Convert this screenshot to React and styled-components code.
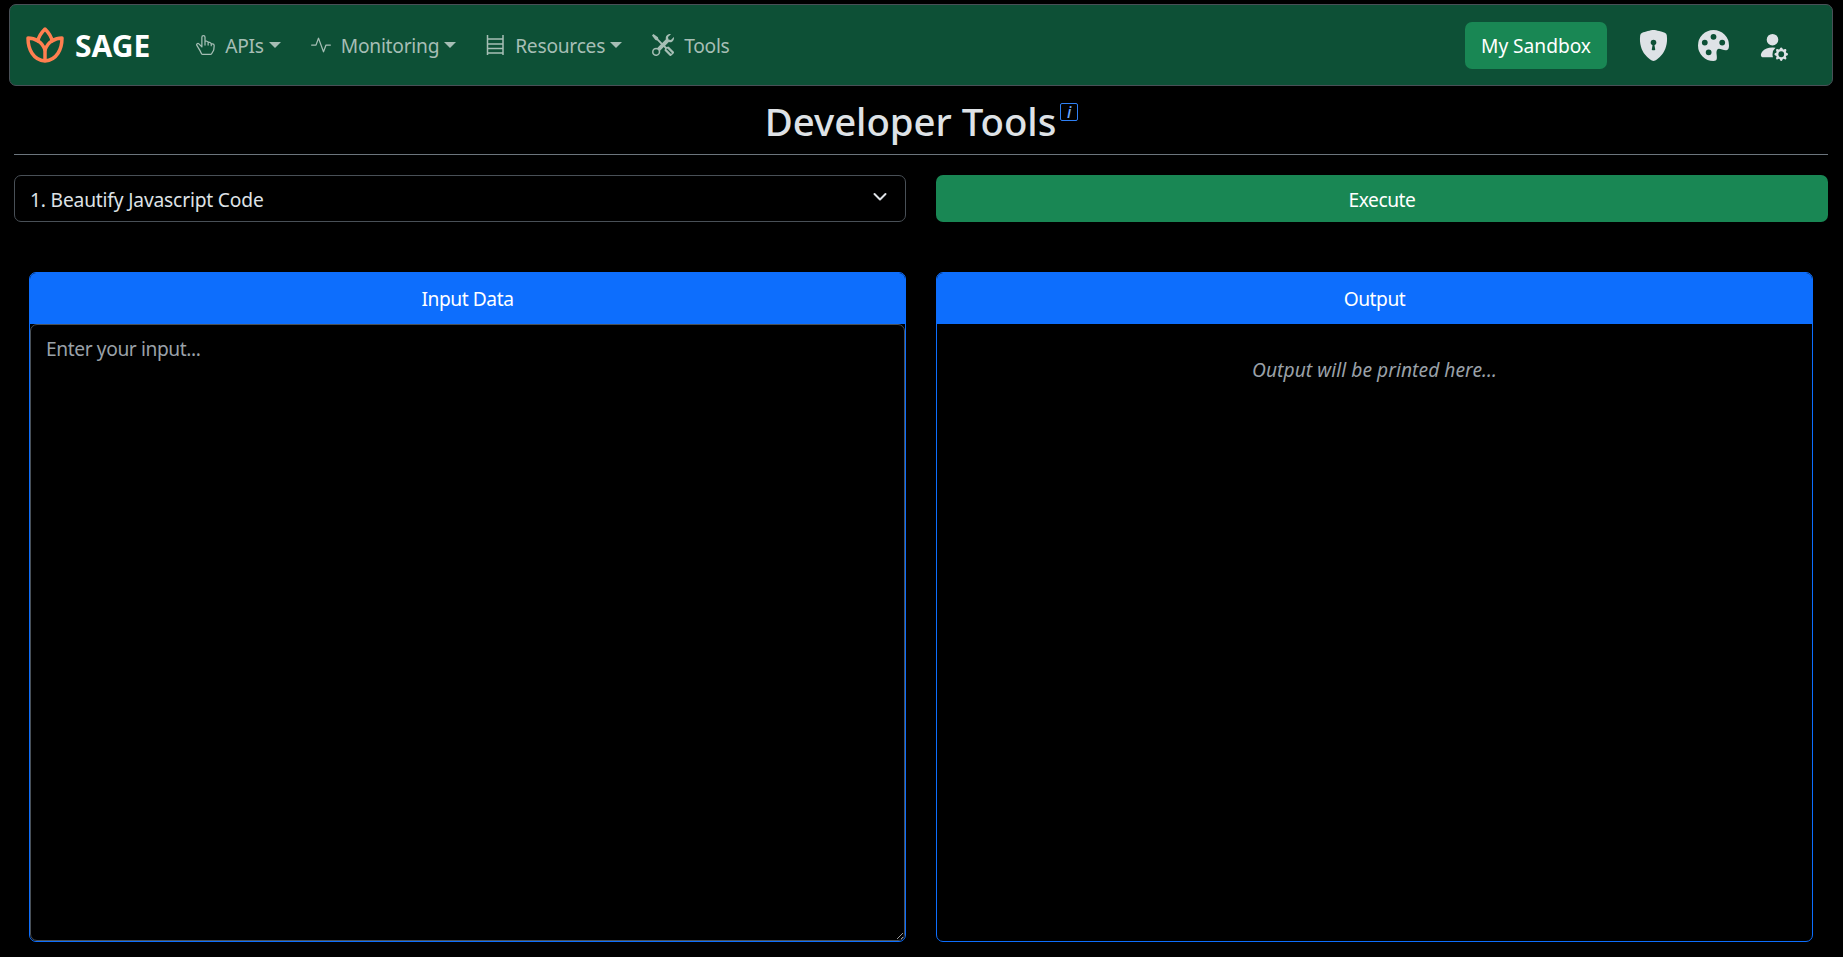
import React from "react";
import styled, { createGlobalStyle } from "styled-components";
import {
  BsHandIndexThumb,
  BsActivity,
  BsTools,
  BsShieldLockFill,
  BsPaletteFill,
  BsPersonFillGear,
} from "react-icons/bs";

const Global = createGlobalStyle`
  html, body { margin: 0; padding: 0; background: #000; height: 100%; }
  body { font-family: "Noto Sans", "Open Sans", sans-serif; color: #dee2e6; overflow: hidden; }
  * { box-sizing: border-box; }
`;

const Page = styled.div`
  width: 1843px;
  height: 957px;
  background: #000;
  display: flex;
  flex-direction: column;
  padding: 4px 0 0;
`;

const Navbar = styled.nav`
  margin: 0 10px 0 9px;
  height: 82px;
  flex: none;
  background: #0d5036;
  border: 1px solid #495057;
  border-radius: 7px;
  display: flex;
  align-items: center;
  padding: 0 16px 0 16px;
`;

const Brand = styled.a`
  display: flex;
  align-items: center;
  gap: 11px;
  color: #fff;
  font-size: 30px;
  font-weight: 700;
  margin-right: 45px;
`;

const NavLinks = styled.div`
  display: flex;
  align-items: center;
  gap: 30px;
  flex: 1;
`;

const NavLink = styled.a`
  display: flex;
  align-items: center;
  gap: 10px;
  color: #a6beb5;
  font-size: 19.2px;
  letter-spacing: -0.25px;
  svg { flex: none; }
`;

const Caret = styled.span`
  width: 0;
  height: 0;
  margin-left: -5px;
  margin-top: -1px;
  border-top: 6px solid #a6beb5;
  border-left: 6px solid transparent;
  border-right: 6px solid transparent;
`;

const SandboxButton = styled.button`
  height: 47px;
  width: 142px;
  border: 0;
  border-radius: 7px;
  background: #198754;
  color: #fff;
  font: inherit;
  font-size: 19.2px;
  letter-spacing: -0.05px;
`;

const IconGroup = styled.div`
  display: flex;
  align-items: center;
  margin-left: 31px;
  gap: 28.5px;
  margin-right: 28px;
  color: #dee2e6;
`;

const TitleRow = styled.h1`
  margin: 0;
  height: 68px;
  flex: none;
  display: flex;
  justify-content: center;
  align-items: center;
  padding-top: 2px;
  font-size: 38.4px;
  font-weight: 500;
  color: #dee2e6;
  letter-spacing: -0.05px;
`;

const InfoBadge = styled.sup`
  display: inline-flex;
  align-items: center;
  justify-content: center;
  width: 18px;
  height: 18px;
  border: 1px solid #2f80f5;
  border-radius: 2px;
  color: #6ea8fe;
  font-size: 16px;
  font-style: italic;
  font-weight: 500;
  margin: -18px 0 0 4px;
  letter-spacing: 0;
`;

const Rule = styled.hr`
  margin: 0 15px 0 14px;
  flex: none;
  border: 0;
  border-top: 1px solid #6c757d;
`;

const Controls = styled.div`
  display: grid;
  grid-template-columns: 892px 892px;
  gap: 30px;
  margin: 20px 0 0 14px;
  height: 47px;
  flex: none;
`;

const SelectWrap = styled.div`
  position: relative;
  svg {
    position: absolute;
    right: 19px;
    top: 17px;
    pointer-events: none;
  }
`;

const Select = styled.select`
  appearance: none;
  width: 100%;
  height: 47px;
  background: #000;
  color: #dee2e6;
  border: 1px solid #495057;
  border-radius: 7px;
  padding: 2px 15px 0;
  font: inherit;
  font-size: 19.2px;
  letter-spacing: -0.17px;
`;

const Execute = styled.button`
  background: #198754;
  border: 0;
  border-radius: 7px;
  padding-top: 2px;
  color: #fff;
  font: inherit;
  font-size: 19.2px;
  letter-spacing: -0.45px;
`;

const Panels = styled.div`
  display: grid;
  grid-template-columns: 877px 877px;
  gap: 30px;
  margin: 50px 0 0 29px;
  height: 670px;
  flex: none;
`;

const Card = styled.section`
  display: flex;
  flex-direction: column;
  border: 1px solid #0d6efd;
  border-radius: 7px;
  overflow: hidden;
`;

const CardHeader = styled.header`
  height: 51px;
  flex: none;
  background: #0d6efd;
  color: #fff;
  display: flex;
  align-items: center;
  justify-content: center;
  font-size: 19.2px;
  letter-spacing: -0.45px;
`;

const Input = styled.textarea`
  flex: 1;
  display: block;
  width: 100%;
  background: #000;
  color: #dee2e6;
  border: 1px solid #495057;
  border-radius: 7px;
  padding: 10px 15px;
  font: inherit;
  font-size: 19.2px;
  letter-spacing: -0.4px;
  outline: none;
  &::placeholder { color: #9aa1a8; opacity: 1; }
`;

const Output = styled.div`
  flex: 1;
  text-align: center;
  padding-top: 32px;
  font-style: italic;
  font-size: 19.2px;
  letter-spacing: 0.05px;
  color: #9aa1a8;
`;

const Logo = () => (
  <svg width="38" height="36" viewBox="0 0 38 36" fill="none" stroke="#ff7f50" strokeWidth="3.5" strokeLinejoin="round" strokeLinecap="round">
    <path d="M19 2 C22 5 25.5 9 26 14 C29 12 32 11 36 11 C36 22 31 33 19 34 C7 33 2 22 2 11 C6 11 9 12 12 14 C12.5 9 16 5 19 2 Z" />
    <path d="M12 14 C15 15.5 17.5 19 19 23 C20.5 19 23 15.5 26 14" />
    <path d="M19 23 V33" />
  </svg>
);

const Ladder = () => (
  <svg width="19" height="20" viewBox="0 0 19 20" fill="none" stroke="currentColor" strokeWidth="1.5">
    <path d="M1.5 0 V20 M17 0 V20" />
    <path d="M1.5 4 H17 M1.5 9 H17 M1.5 13.5 H17 M1.5 18 H17" />
  </svg>
);

export default function App() {
  return (
    <Page>
      <Global />
      <Navbar>
        <Brand>
          <Logo />
          SAGE
        </Brand>
        <NavLinks>
          <NavLink><BsHandIndexThumb size={20} />APIs<Caret /></NavLink>
          <NavLink><BsActivity size={20} />Monitoring<Caret /></NavLink>
          <NavLink><Ladder />Resources<Caret /></NavLink>
          <NavLink><BsTools size={22} />Tools</NavLink>
        </NavLinks>
        <SandboxButton>My Sandbox</SandboxButton>
        <IconGroup>
          <BsShieldLockFill size={31} />
          <BsPaletteFill size={31} />
          <BsPersonFillGear size={31} />
        </IconGroup>
      </Navbar>
      <TitleRow>
        Developer Tools<InfoBadge>i</InfoBadge>
      </TitleRow>
      <Rule />
      <Controls>
        <SelectWrap>
          <Select defaultValue="1">
            <option value="1">1. Beautify Javascript Code</option>
          </Select>
          <svg width="14" height="10" viewBox="0 0 14 10" fill="none" stroke="#dee2e6" strokeWidth="2" strokeLinecap="round" strokeLinejoin="round">
            <path d="M1.5 2 L7 7.5 L12.5 2" />
          </svg>
        </SelectWrap>
        <Execute>Execute</Execute>
      </Controls>
      <Panels>
        <Card>
          <CardHeader>Input Data</CardHeader>
          <Input placeholder="Enter your input..." />
        </Card>
        <Card>
          <CardHeader>Output</CardHeader>
          <Output>Output will be printed here...</Output>
        </Card>
      </Panels>
    </Page>
  );
}
